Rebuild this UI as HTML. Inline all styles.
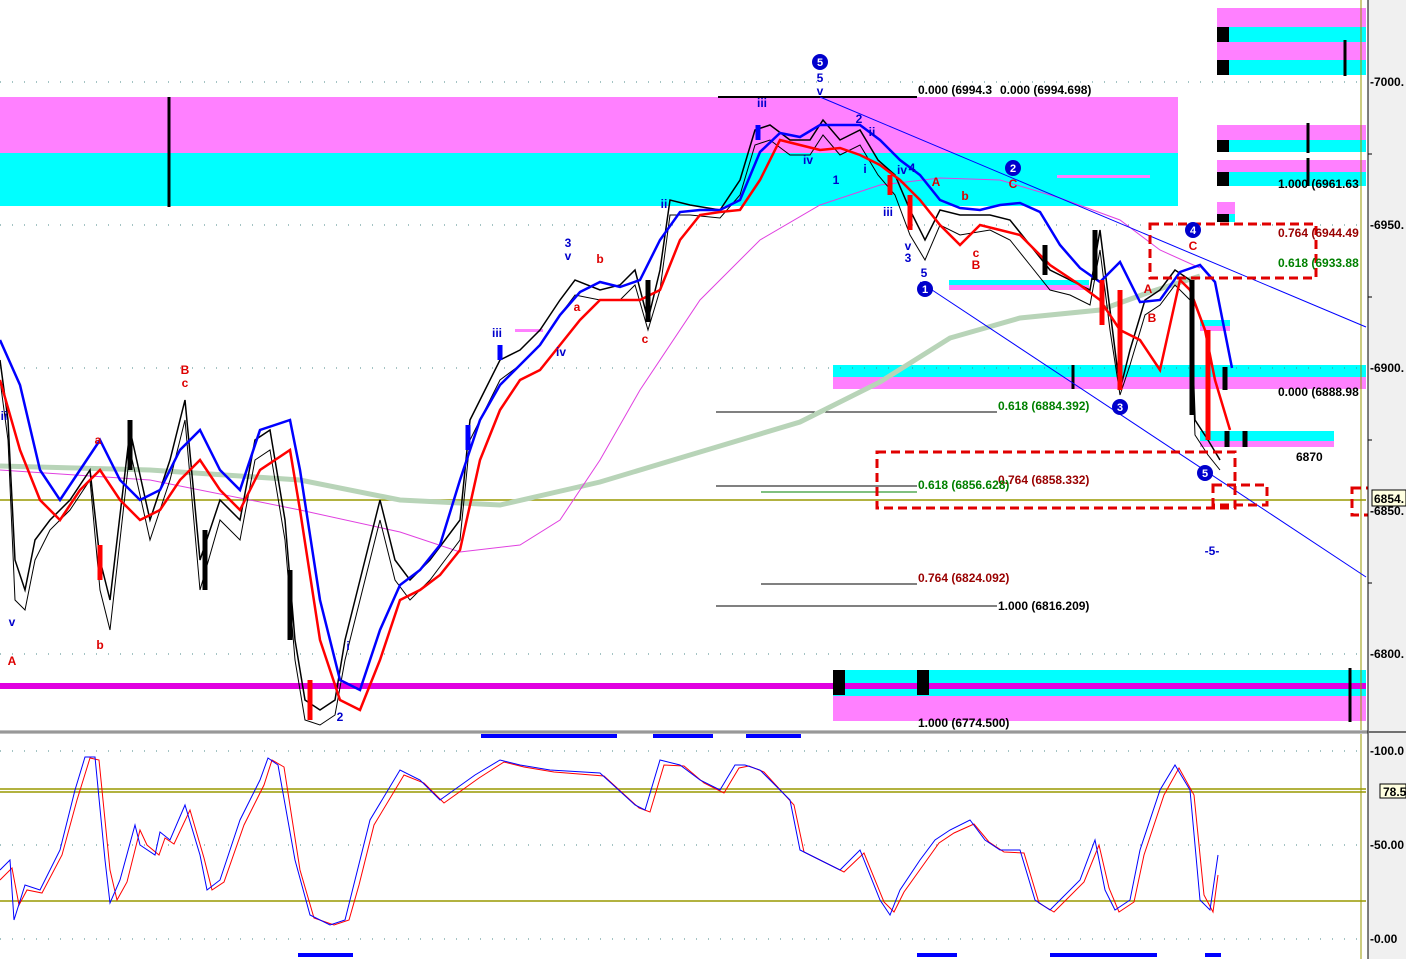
<!DOCTYPE html>
<html><head><meta charset="utf-8"><style>
html,body{margin:0;padding:0;background:#fff;}
svg{display:block;font-family:"Liberation Sans",sans-serif;font-weight:bold;}
</style></head><body>
<svg width="1406" height="959" viewBox="0 0 1406 959" xmlns="http://www.w3.org/2000/svg">
<rect x="0" y="0" width="1406" height="959" fill="#fff"/>
<!-- zones -->
<rect x="0" y="97" width="1178" height="56" fill="#ff80ff"/>
<rect x="0" y="153" width="1178" height="53" fill="#00ffff"/>
<rect x="1217" y="8" width="149" height="19" fill="#ff80ff"/>
<rect x="1217" y="27" width="149" height="15" fill="#00ffff"/>
<rect x="1217" y="42" width="149" height="18" fill="#ff80ff"/>
<rect x="1217" y="60" width="149" height="15" fill="#00ffff"/>
<rect x="1217" y="27" width="12" height="15" fill="#000"/>
<rect x="1217" y="60" width="12" height="15" fill="#000"/>
<rect x="1217" y="125" width="149" height="15" fill="#ff80ff"/>
<rect x="1217" y="140" width="149" height="12" fill="#00ffff"/>
<rect x="1217" y="140" width="12" height="12" fill="#000"/>
<rect x="1217" y="160" width="149" height="12" fill="#ff80ff"/>
<rect x="1217" y="172" width="149" height="14" fill="#00ffff"/>
<rect x="1217" y="172" width="12" height="14" fill="#000"/>
<rect x="1217" y="202" width="18" height="12" fill="#ff80ff"/>
<rect x="1217" y="214" width="18" height="8" fill="#00ffff"/>
<rect x="1217" y="214" width="12" height="8" fill="#000"/>
<rect x="833" y="365" width="533" height="12" fill="#00ffff"/>
<rect x="833" y="377" width="533" height="12" fill="#ff80ff"/>
<rect x="1200" y="431" width="134" height="10" fill="#00ffff"/>
<rect x="1200" y="441" width="134" height="6" fill="#ff80ff"/>
<rect x="1200" y="320" width="30" height="6" fill="#00ffff"/>
<rect x="1200" y="326" width="30" height="5" fill="#ff80ff"/>
<rect x="949" y="280" width="140" height="5" fill="#00ffff"/>
<rect x="949" y="285" width="140" height="5" fill="#ff80ff"/>
<rect x="515" y="329" width="28" height="3" fill="#ff80ff"/>
<rect x="1057" y="175" width="93" height="3" fill="#ff80ff"/>
<rect x="833" y="670" width="533" height="15" fill="#00ffff"/>
<rect x="0" y="683" width="1366" height="6" fill="#e000e0"/>
<rect x="833" y="689" width="533" height="7" fill="#00ffff"/>
<rect x="833" y="696" width="533" height="25" fill="#ff80ff"/>
<rect x="833" y="670" width="12" height="25" fill="#000"/>
<rect x="917" y="670" width="12" height="25" fill="#000"/>
<line x1="169" y1="97" x2="169" y2="207" stroke="#000" stroke-width="3"/>
<line x1="1345" y1="40" x2="1345" y2="76" stroke="#000" stroke-width="3"/>
<line x1="1308" y1="123" x2="1308" y2="153" stroke="#000" stroke-width="3"/>
<line x1="1308" y1="158" x2="1308" y2="186" stroke="#000" stroke-width="3"/>
<line x1="1350" y1="668" x2="1350" y2="722" stroke="#000" stroke-width="3"/>
<line x1="1073" y1="365" x2="1073" y2="389" stroke="#000" stroke-width="3"/>
<!-- grid dots -->
<g stroke="#4a8a8a" stroke-width="1" stroke-dasharray="1,11">
<line x1="0" y1="82" x2="1366" y2="82"/><line x1="0" y1="225" x2="1366" y2="225"/>
<line x1="0" y1="368" x2="1366" y2="368"/><line x1="0" y1="654" x2="1366" y2="654"/>
<line x1="0" y1="751" x2="1366" y2="751"/><line x1="0" y1="845" x2="1366" y2="845"/><line x1="0" y1="939" x2="1366" y2="939"/>
</g>
<!-- fib lines -->
<g stroke="#000" stroke-width="1">
<line x1="718" y1="97" x2="917" y2="97" stroke-width="2"/>
<line x1="716" y1="412" x2="997" y2="412"/>
<line x1="716" y1="606" x2="997" y2="606"/>
<line x1="761" y1="584" x2="917" y2="584"/>
<line x1="716" y1="486" x2="917" y2="486"/>
</g>
<line x1="761" y1="492" x2="917" y2="492" stroke="#008000"/>
<line x1="0" y1="500" x2="1366" y2="500" stroke="#999900" stroke-width="1.5"/>
<line x1="1361" y1="0" x2="1361" y2="959" stroke="#999900"/>
<!-- MAs -->
<polyline fill="none" stroke="#b8d4b8" stroke-width="5" points="0,466 150,470 300,480 400,500 500,505 600,482 700,452 800,422 880,382 950,338 1020,318 1100,310 1150,292 1200,276"/>
<polyline fill="none" stroke="#e040e0" stroke-width="1" points="0,470 150,480 300,510 400,532 460,552 520,545 560,520 600,460 640,390 700,300 760,240 820,205 880,185 940,178 1000,180 1060,198 1120,220 1160,250 1200,268"/>
<polyline fill="none" stroke="#0000ff" stroke-width="1" points="820,97 1366,327"/>
<polyline fill="none" stroke="#0000ff" stroke-width="1" points="920,282 1366,577"/>
<!-- price: range band -->
<polyline fill="none" stroke="#000" stroke-width="1" points="0,380 8,440 15,600 25,610 35,560 50,530 70,510 90,480 100,590 110,630 130,450 150,540 170,480 185,420 200,590 220,520 240,540 255,460 270,450 285,540 295,660 305,720 320,725 335,715 345,660 360,600 380,520 395,580 410,600 430,580 445,560 460,540 470,440 485,410 500,380 520,365 540,345 560,315 575,295 600,300 620,300 635,285 648,330 660,290 670,215 690,215 720,218 740,195 755,145 770,140 790,155 810,155 823,135 840,155 860,145 878,175 895,195 910,235 925,260 940,225 960,235 990,230 1010,240 1030,265 1050,290 1070,295 1090,305 1100,250 1110,330 1120,395 1130,365 1145,315 1160,305 1175,285 1190,300 1195,435 1208,455 1220,470"/>
<polyline fill="none" stroke="#000" stroke-width="1.5" points="0,360 8,420 15,560 25,590 35,540 50,520 70,500 90,470 100,560 110,600 130,430 150,520 170,460 185,400 200,560 220,500 240,520 255,440 270,430 285,520 295,640 305,700 320,710 335,700 345,640 360,580 380,500 395,560 410,580 430,560 445,540 460,520 470,420 485,390 500,360 520,350 540,330 560,300 575,280 600,290 620,285 635,270 648,320 660,270 670,200 690,205 720,210 740,180 755,130 770,125 790,140 810,140 823,120 840,140 860,130 878,160 895,175 910,210 925,240 940,210 960,215 990,215 1010,220 1030,245 1050,270 1070,280 1090,290 1100,230 1110,310 1120,390 1130,350 1145,300 1160,290 1175,270 1190,280 1195,420 1208,440 1220,460"/>
<polyline fill="none" stroke="#0000ff" stroke-width="2.5" points="0,340 20,385 40,470 60,500 80,470 100,440 120,480 140,500 160,490 180,450 200,430 220,470 240,490 260,430 290,420 300,470 320,600 340,680 360,690 380,630 400,585 420,570 440,545 460,480 480,420 500,385 520,365 540,345 560,315 580,292 600,282 620,287 640,280 660,240 680,212 700,210 720,210 740,200 760,152 780,133 800,137 820,125 840,125 860,125 880,140 900,160 920,175 940,200 960,208 980,210 1000,205 1020,203 1040,212 1060,245 1080,268 1100,282 1120,262 1140,302 1160,300 1180,272 1200,265 1215,282 1232,368"/>
<polyline fill="none" stroke="#ff0000" stroke-width="2.5" points="0,380 20,450 40,500 60,520 80,490 100,470 120,500 140,520 160,510 180,480 200,460 220,490 240,510 260,470 290,450 300,510 320,640 340,700 360,710 380,660 400,600 420,590 440,575 460,550 480,460 500,410 520,380 540,370 560,345 580,320 600,300 620,300 640,300 660,290 680,240 700,215 720,212 740,210 760,180 780,140 800,145 820,150 840,148 860,155 880,165 900,180 920,200 940,225 960,245 980,225 1000,230 1020,235 1050,265 1080,285 1100,300 1120,330 1140,340 1160,370 1180,280 1190,290 1205,330 1215,380 1230,430"/>
<g stroke="#000" stroke-width="5">
<line x1="130" y1="420" x2="130" y2="470"/><line x1="290" y1="570" x2="290" y2="640"/><line x1="205" y1="530" x2="205" y2="590"/>
<line x1="648" y1="280" x2="648" y2="322"/><line x1="1095" y1="230" x2="1095" y2="280"/><line x1="1192" y1="280" x2="1192" y2="415"/>
<line x1="1045" y1="245" x2="1045" y2="275"/><line x1="1225" y1="367" x2="1225" y2="390"/><line x1="1227" y1="431" x2="1227" y2="447"/><line x1="1245" y1="431" x2="1245" y2="447"/>
</g>
<g stroke="#ff0000" stroke-width="5">
<line x1="100" y1="545" x2="100" y2="580"/><line x1="890" y1="175" x2="890" y2="195"/><line x1="910" y1="195" x2="910" y2="230"/><line x1="1102" y1="280" x2="1102" y2="325"/><line x1="1120" y1="290" x2="1120" y2="390"/><line x1="1208" y1="330" x2="1208" y2="440"/><line x1="310" y1="680" x2="310" y2="720"/>
</g>
<g stroke="#0000ff" stroke-width="5">
<line x1="468" y1="425" x2="468" y2="450"/><line x1="500" y1="345" x2="500" y2="360"/><line x1="758" y1="125" x2="758" y2="140"/>
</g>
<!-- red dashed boxes -->
<g fill="none" stroke="#e00000" stroke-width="3" stroke-dasharray="9,5">
<rect x="1150" y="224" width="166" height="54"/>
<rect x="877" y="452" width="358" height="56"/>
<rect x="1213" y="485" width="54" height="20"/>
<rect x="1352" y="488" width="60" height="27"/>
</g>
<!-- wave circles -->
<g fill="#0000cc">
<circle cx="820" cy="62" r="8"/><circle cx="1013" cy="168" r="8"/><circle cx="925" cy="289" r="8"/><circle cx="1120" cy="407" r="8"/><circle cx="1193" cy="230" r="8"/><circle cx="1205" cy="473" r="8"/>
</g>
<g fill="#fff" font-size="11" text-anchor="middle">
<text x="820" y="66">5</text><text x="1013" y="172">2</text><text x="925" y="293">1</text><text x="1120" y="411">3</text><text x="1193" y="234">4</text><text x="1205" y="477">5</text>
</g>
<!-- labels -->
<g font-size="12" fill="#0000cc" text-anchor="middle">
<text x="820" y="82">5</text><text x="820" y="95">v</text><text x="762" y="107">iii</text><text x="808" y="164">iv</text><text x="836" y="184">1</text><text x="859" y="123">2</text><text x="872" y="136">ii</text><text x="865" y="173">i</text><text x="888" y="216">iii</text><text x="902" y="174">iv</text><text x="912" y="172">4</text>
<text x="908" y="250">v</text><text x="908" y="262">3</text><text x="924" y="277">5</text>
<text x="568" y="247">3</text><text x="568" y="260">v</text><text x="497" y="337">iii</text><text x="561" y="356">iv</text><text x="664" y="208">ii</text><text x="12" y="626">v</text><text x="4" y="420">ii</text><text x="340" y="721">2</text><text x="348" y="650">i</text><text x="1212" y="555">-5-</text>
</g>
<g font-size="12" fill="#dd0000" text-anchor="middle">
<text x="185" y="374">B</text><text x="185" y="387">c</text><text x="98" y="444">a</text><text x="100" y="649">b</text><text x="12" y="665">A</text><text x="600" y="263">b</text><text x="577" y="311">a</text><text x="645" y="343">c</text>
<text x="936" y="186">A</text><text x="1013" y="188">C</text><text x="965" y="200">b</text><text x="976" y="257">c</text><text x="976" y="269">B</text><text x="1193" y="250">C</text><text x="1148" y="293">A</text><text x="1152" y="322">B</text>
</g>
<g font-size="12" fill="#000">
<text x="918" y="94">0.000 (6994.3</text><text x="1000" y="94">0.000 (6994.698)</text>
<text x="1278" y="188">1.000 (6961.63</text>
<text x="1278" y="396">0.000 (6888.98</text>
<text x="1296" y="461">6870</text>
<text x="998" y="610">1.000 (6816.209)</text>
<text x="918" y="727">1.000 (6774.500)</text>
</g>
<g font-size="12" fill="#990000">
<text x="1278" y="237">0.764 (6944.49</text><text x="998" y="484">0.764 (6858.332)</text><text x="918" y="582">0.764 (6824.092)</text>
</g>
<g font-size="12" fill="#008000">
<text x="1278" y="267">0.618 (6933.88</text><text x="998" y="410">0.618 (6884.392)</text><text x="918" y="489">0.618 (6856.628)</text>
</g>
<!-- separator -->
<rect x="0" y="730" width="1368" height="4" fill="#c0c0c0"/>
<line x1="0" y1="732" x2="1368" y2="732" stroke="#707070"/>
<g fill="#0000ff">
<rect x="481" y="734" width="136" height="4"/><rect x="653" y="734" width="60" height="4"/><rect x="746" y="734" width="55" height="4"/>
<rect x="298" y="953" width="55" height="4"/><rect x="917" y="953" width="40" height="4"/><rect x="1050" y="953" width="107" height="4"/><rect x="1205" y="953" width="16" height="4"/>
</g>
<line x1="0" y1="789" x2="1366" y2="789" stroke="#999900" stroke-width="1.5"/>
<line x1="0" y1="792" x2="1366" y2="792" stroke="#999900" stroke-width="1.5"/>
<line x1="0" y1="901" x2="1366" y2="901" stroke="#999900" stroke-width="1.5"/>
<polyline fill="none" stroke="#ff0000" stroke-width="1" points="0,880 12,868 19,905 27,890 42,893 62,855 77,800 90,758 99,760 110,870 117,900 127,882 140,830 147,845 159,855 165,838 174,844 190,810 204,858 212,890 224,882 244,825 264,785 272,760 284,767 300,870 314,918 334,925 349,920 359,885 374,825 404,775 424,783 444,803 479,778 504,762 524,767 554,772 604,776 639,808 650,812 664,765 684,766 704,783 724,793 739,768 749,766 764,772 794,805 804,852 824,862 844,872 864,853 884,902 894,912 904,892 924,864 939,843 954,833 974,824 989,842 1004,852 1024,853 1039,903 1054,912 1064,902 1084,882 1099,845 1109,888 1119,912 1134,902 1144,855 1164,795 1179,768 1194,795 1204,895 1213,912 1218,875"/>
<polyline fill="none" stroke="#0000ff" stroke-width="1" points="0,870 10,860 14,920 25,885 40,890 60,850 75,790 85,757 95,757 105,860 110,903 120,880 135,825 140,845 155,855 160,832 170,840 185,805 200,855 207,890 220,880 240,820 260,780 268,758 278,765 295,860 310,915 330,925 345,920 355,880 370,820 400,770 420,780 440,800 475,775 500,760 520,765 550,770 600,773 635,805 645,810 660,760 680,765 700,780 720,790 735,765 745,765 760,770 790,800 800,850 820,860 840,870 860,850 880,900 890,915 900,890 920,860 935,840 950,830 970,820 985,840 1000,850 1020,850 1035,900 1050,910 1060,900 1080,880 1095,840 1105,890 1115,910 1130,900 1140,850 1160,790 1175,765 1190,790 1200,900 1210,910 1218,855"/>
<!-- axis -->
<rect x="1368" y="0" width="38" height="959" fill="#f0f0f0"/>
<line x1="1368" y1="0" x2="1368" y2="959" stroke="#000"/>
<line x1="1368" y1="732" x2="1406" y2="732" stroke="#707070" stroke-width="2"/>
<g font-size="12" fill="#000">
<text x="1370" y="86">-7000.</text><text x="1370" y="229">-6950.</text><text x="1370" y="372">-6900.</text><text x="1370" y="658">-6800.</text><text x="1370" y="515">-6850.</text>
<text x="1370" y="755">-100.0</text><text x="1370" y="849">-50.00</text><text x="1370" y="943">-0.00</text>
</g>
<rect x="1372" y="490" width="34" height="16" fill="#ffffe0" stroke="#000"/>
<text x="1374" y="503" font-size="12" fill="#000">6854.</text>
<rect x="1380" y="784" width="26" height="14" fill="#ffffe0" stroke="#000"/>
<text x="1383" y="796" font-size="12" fill="#000">78.5</text>
<g stroke="#000"><line x1="1368" y1="154" x2="1372" y2="154"/><line x1="1368" y1="297" x2="1372" y2="297"/><line x1="1368" y1="440" x2="1372" y2="440"/><line x1="1368" y1="583" x2="1372" y2="583"/></g>
</svg>
</body></html>
